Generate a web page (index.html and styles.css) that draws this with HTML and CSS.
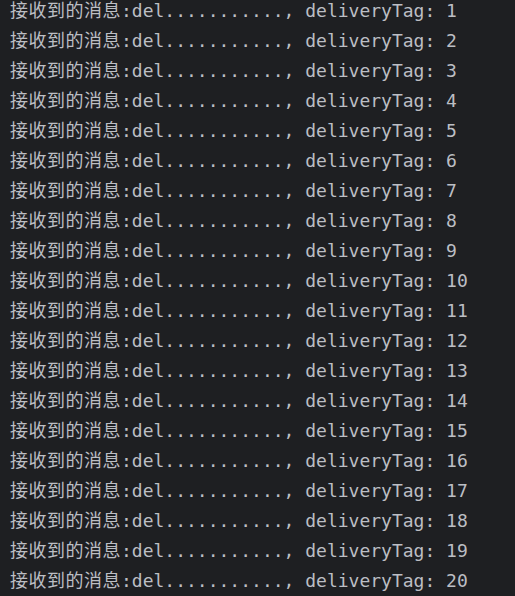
FILE: index.html
```html
<!DOCTYPE html>
<html lang="zh-CN">
<head>
    <meta charset="UTF-8">
    <meta name="viewport" content="width=device-width, initial-scale=1.0">
    <title>Run - Consumer</title>
    <link rel="stylesheet" href="styles.css">
</head>
<body>
    <div class="console">
        <div class="line"><span class="cjk">接收到的消息</span>:del..........., deliveryTag: 1</div>
        <div class="line"><span class="cjk">接收到的消息</span>:del..........., deliveryTag: 2</div>
        <div class="line"><span class="cjk">接收到的消息</span>:del..........., deliveryTag: 3</div>
        <div class="line"><span class="cjk">接收到的消息</span>:del..........., deliveryTag: 4</div>
        <div class="line"><span class="cjk">接收到的消息</span>:del..........., deliveryTag: 5</div>
        <div class="line"><span class="cjk">接收到的消息</span>:del..........., deliveryTag: 6</div>
        <div class="line"><span class="cjk">接收到的消息</span>:del..........., deliveryTag: 7</div>
        <div class="line"><span class="cjk">接收到的消息</span>:del..........., deliveryTag: 8</div>
        <div class="line"><span class="cjk">接收到的消息</span>:del..........., deliveryTag: 9</div>
        <div class="line"><span class="cjk">接收到的消息</span>:del..........., deliveryTag: 10</div>
        <div class="line"><span class="cjk">接收到的消息</span>:del..........., deliveryTag: 11</div>
        <div class="line"><span class="cjk">接收到的消息</span>:del..........., deliveryTag: 12</div>
        <div class="line"><span class="cjk">接收到的消息</span>:del..........., deliveryTag: 13</div>
        <div class="line"><span class="cjk">接收到的消息</span>:del..........., deliveryTag: 14</div>
        <div class="line"><span class="cjk">接收到的消息</span>:del..........., deliveryTag: 15</div>
        <div class="line"><span class="cjk">接收到的消息</span>:del..........., deliveryTag: 16</div>
        <div class="line"><span class="cjk">接收到的消息</span>:del..........., deliveryTag: 17</div>
        <div class="line"><span class="cjk">接收到的消息</span>:del..........., deliveryTag: 18</div>
        <div class="line"><span class="cjk">接收到的消息</span>:del..........., deliveryTag: 19</div>
        <div class="line"><span class="cjk">接收到的消息</span>:del..........., deliveryTag: 20</div>
    </div>
</body>
</html>
```

FILE: styles.css
```css
:root {
    --background: #1e1f22;
    --text: #bcbec4;
}

* {
    margin: 0;
    padding: 0;
    box-sizing: border-box;
}

body {
    background-color: var(--background);
    color: var(--text);
    min-height: 100vh;
    overflow: hidden;
}

.console {
    margin-top: -4px;
    padding-left: 10px;
    font-family: 'DejaVu Sans Mono', 'Noto Sans CJK SC', monospace;
    font-size: 18px;
}

.line {
    height: 30px;
    line-height: 30px;
    white-space: pre;
}

.cjk {
    letter-spacing: 0.5px;
}
```
